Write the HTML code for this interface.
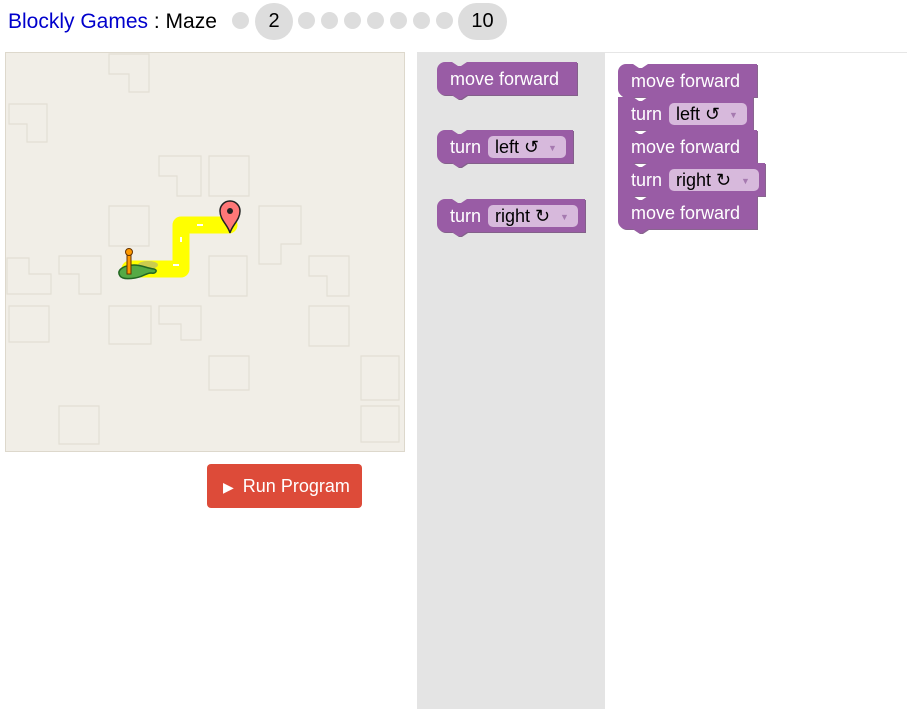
<!DOCTYPE html>
<html><head><meta charset="utf-8"><style>
body{margin:0;width:907px;height:709px;overflow:hidden;background:#fff;font-family:"Liberation Sans",sans-serif;position:relative}
.hdr{position:absolute;left:8px;top:10px;font-size:21px;color:#000}
.hdr a{color:#00c;text-decoration:none}
.dot{position:absolute;top:12px;width:17px;height:17px;border-radius:50%;background:#ddd}
.big{position:absolute;top:3px;height:37px;border-radius:19px;background:#ddd;font-size:20px;text-align:center;line-height:37px}
#run{position:absolute;left:207px;top:464px;width:155px;height:44px;background:#dd4b39;border-radius:4px;color:#fff;font-size:18px;line-height:44px}
</style></head><body>
<div class="hdr"><a>Blockly Games</a> : Maze</div>
<div class="dot" style="left:232px"></div>
<div class="big" style="left:255px;width:38px">2</div>
<div class="dot" style="left:298px"></div><div class="dot" style="left:321px"></div><div class="dot" style="left:344px"></div><div class="dot" style="left:367px"></div><div class="dot" style="left:390px"></div><div class="dot" style="left:413px"></div><div class="dot" style="left:436px"></div>
<div class="big" style="left:458px;width:49px">10</div>
<div style="position:absolute;left:417px;top:52px;width:490px;height:1px;background:#e6e6e6"></div>
<div style="position:absolute;left:417px;top:52px;width:188px;height:657px;background:#e4e4e4"></div>
<svg style="position:absolute;left:5px;top:52px" width="400" height="400">
<rect x="0.5" y="0.5" width="399" height="399" fill="#f1eee7" stroke="#ddd8cc"/>
<g fill="none" stroke="#e3dfd4" stroke-width="1.2">
<path d="M104 2h40v38h-20v-18h-20z"/><path d="M4 52h38v38h-20v-18h-18z"/>
<path d="M154 104h42v40h-24v-20h-18z"/><path d="M204 104h40v40h-40z"/>
<path d="M104 154h40v40h-40z"/><path d="M254 154h42v38h-20v20h-22z"/>
<path d="M2 206h22v16h22v20h-44z"/><path d="M54 204h42v38h-22v-20h-20z"/>
<path d="M204 204h38v40h-38z"/><path d="M304 204h40v40h-22v-20h-18z"/>
<path d="M4 254h40v36h-40z"/><path d="M104 254h42v38h-42z"/><path d="M154 254h42v34h-20v-16h-22z"/>
<path d="M304 254h40v40h-40z"/><path d="M204 304h40v34h-40z"/>
<path d="M356 304h38v44h-38z"/><path d="M54 354h40v38h-40z"/><path d="M356 354h38v36h-38z"/>
</g>
<path d="M125 217H176V173H224" fill="none" stroke="#ff0" stroke-width="17" stroke-linejoin="round" stroke-linecap="round"/>
<path d="M168 213h6M176 190v-5M192 173h6" stroke="#fff" stroke-width="2"/>
<ellipse cx="143" cy="213" rx="10" ry="4" fill="#999" opacity=".5"/>
<path d="M115 224c-4-6 4-11 14-11c8 0 12 3 20 4c4 1 2 5-3 4c-5 0-8 4-16 5c-6 1-13 1-15-2z" fill="#5a4" stroke="#262" stroke-width="1.5"/>
<rect x="122" y="200" width="4" height="22" fill="#f90" stroke="#630"/><circle cx="124" cy="200" r="3.5" fill="#f90" stroke="#630"/>
<path d="M225 181c-2-8-10-13-10-22a10 10 0 0 1 20 0c0 9-8 14-10 22z" fill="#f77" stroke="#222" stroke-width="1.5"/><circle cx="225" cy="159" r="3" fill="#222"/>
</svg>
<div id="run"><span style="margin-left:16px;font-size:14px">&#9654;</span> <span style="margin-left:4px">Run Program</span></div>
<svg style="position:absolute;left:0;top:0" width="907" height="709" font-family="Liberation Sans,sans-serif" font-size="18">
<defs><filter id="s"><feDropShadow dx="1" dy="1" stdDeviation="0" flood-color="#6b3f73" flood-opacity=".8"/></filter></defs>
<g fill="#995ba5" filter="url(#s)">
<path d="M445 62H452l6 4h3l6-4H577V95H467l-6 4h-3l-6-4H445a8 8 0 0 1-8-8V70a8 8 0 0 1 8-8z"/>
<path d="M445 130H452l6 4h3l6-4H573V163H467l-6 4h-3l-6-4H445a8 8 0 0 1-8-8V138a8 8 0 0 1 8-8z"/>
<path d="M445 199H452l6 4h3l6-4H585V232H467l-6 4h-3l-6-4H445a8 8 0 0 1-8-8V207a8 8 0 0 1 8-8z"/>
<path d="M626 64H633l6 4h3l6-4H757V97H626a8 8 0 0 1-8-8V72a8 8 0 0 1 8-8z"/>
<path d="M618 97H633l6 4h3l6-4H753V130H618z"/>
<path d="M618 130H633l6 4h3l6-4H757V163H618z"/>
<path d="M618 163H633l6 4h3l6-4H765V196H618z"/>
<path d="M618 196H633l6 4h3l6-4H757V229H648l-6 4h-3l-6-4H626a8 8 0 0 1-8-8z"/>
</g>
<g fill="#d7b9dc">
<rect x="488" y="136" width="78" height="22" rx="5"/><rect x="488" y="205" width="90" height="22" rx="5"/>
<rect x="669" y="103" width="78" height="22" rx="5"/><rect x="669" y="169" width="90" height="22" rx="5"/>
</g>
<g fill="#fff">
<text x="450" y="85">move forward</text><text x="450" y="153">turn</text><text x="450" y="222">turn</text>
<text x="631" y="87">move forward</text><text x="631" y="120">turn</text><text x="631" y="153">move forward</text><text x="631" y="186">turn</text><text x="631" y="219">move forward</text>
</g>
<g fill="#000"><text x="495" y="153">left ↺</text><text x="495" y="222">right ↻</text><text x="676" y="120">left ↺</text><text x="676" y="186">right ↻</text></g>
<g fill="#a67ab0" font-size="9"><text x="548" y="151">▼</text><text x="560" y="220">▼</text><text x="729" y="118">▼</text><text x="741" y="184">▼</text></g>
</svg>
</body></html>
